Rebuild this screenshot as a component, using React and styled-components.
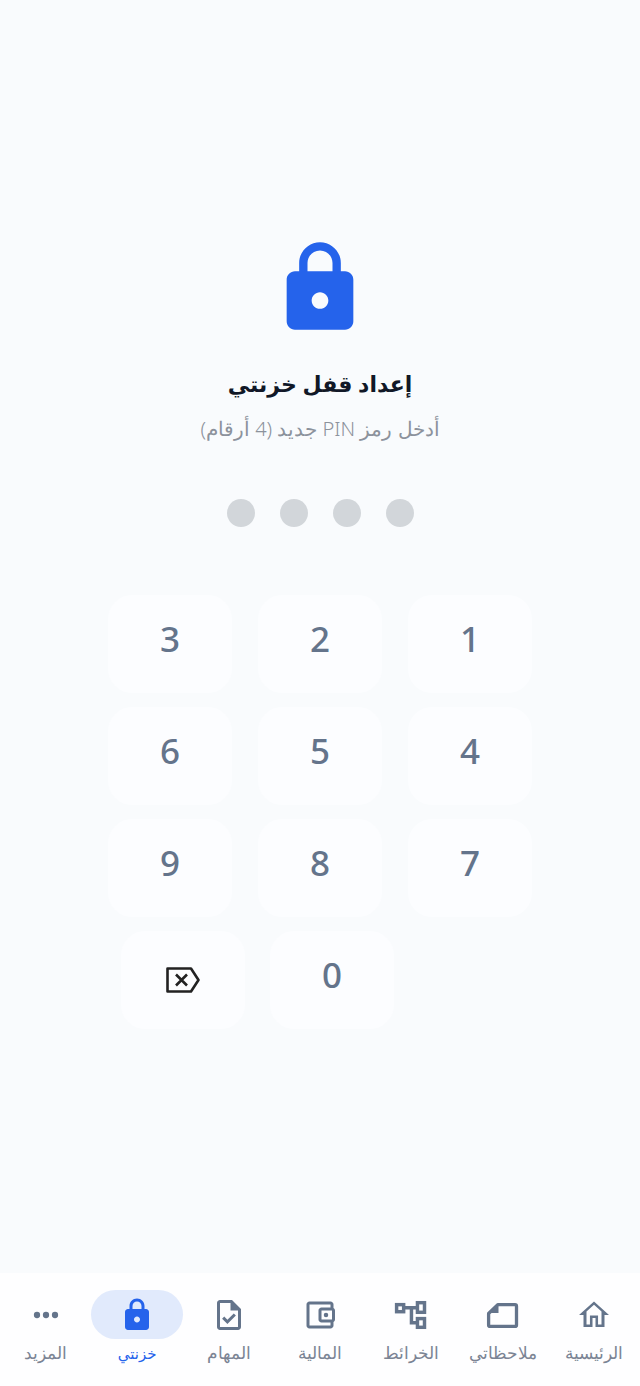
import React from "react";
import styled, { createGlobalStyle } from "styled-components";

const Global = createGlobalStyle`
  html, body { margin: 0; padding: 0; background: #f9fbfd; }
  * { box-sizing: border-box; }
`;

const Page = styled.div`
  width: 640px;
  height: 1386px;
  direction: rtl;
  display: flex;
  flex-direction: column;
  background: #f9fbfd;
  font-family: "Noto Sans", "DejaVu Sans", sans-serif;
`;

const Main = styled.main`
  flex: 1;
  display: flex;
  flex-direction: column;
  align-items: center;
  padding-top: 238px;
`;

const Title = styled.h1`
  margin: 25px 0 0;
  font-size: 22px;
  line-height: 40px;
  font-weight: 700;
  color: #111827;
`;

const Subtitle = styled.p`
  margin: 11px 0 0;
  font-size: 20px;
  line-height: 30px;
  font-weight: 300;
  color: #8c929c;
`;

const Dots = styled.div`
  display: flex;
  gap: 25px;
  margin-top: 55px;
`;

const Dot = styled.span`
  width: 28px;
  height: 28px;
  border-radius: 50%;
  background: #d2d6da;
`;

const Pad = styled.div`
  margin-top: 68px;
  width: 424px;
  display: flex;
  flex-wrap: wrap;
  justify-content: space-between;
  row-gap: 14px;
`;

const LastRow = styled.div`
  display: flex;
  gap: 25px;
  margin-top: 14px;
  width: 424px;
  padding-right: 138px;
`;

const Key = styled.button`
  width: 124px;
  height: 98px;
  border: 0;
  border-radius: 24px;
  background: #fcfdff;
  color: #64748b;
  font-family: inherit;
  font-size: 35px;
  font-weight: 500;
  line-height: 1;
  padding: 0 0 11px;
  display: flex;
  align-items: center;
  justify-content: center;
`;

const IconKey = styled(Key)`
  padding: 0;
`;

const Nav = styled.nav`
  height: 113px;
  background: #fefeff;
  display: flex;
  justify-content: space-between;
  padding: 17px 0 0;
`;

const NavItem = styled.div`
  width: 91.4px;
  display: flex;
  flex-direction: column;
  align-items: center;
  color: ${(p) => (p.$active ? "#2563eb" : "#7b8494")};
  font-size: ${(p) => (p.$active ? "15px" : "17px")};
  font-weight: ${(p) => (p.$active ? 500 : 300)};
`;

const IconWrap = styled.span`
  width: 92px;
  height: 49px;
  display: flex;
  align-items: center;
  justify-content: center;
  border-radius: 25px;
  background: ${(p) => (p.$active ? "#e1eafc" : "transparent")};
  color: ${(p) => (p.$active ? "#2563eb" : "#64748b")};
`;

const NavLabel = styled.span`
  margin-top: 2px;
  line-height: 24px;
  white-space: nowrap;
`;

const Glyph = ({ size = 36, children }) => (
  <svg width={size} height={size} viewBox="0 0 24 24" fill="currentColor">
    {children}
  </svg>
);

const LockPath = () => (
  <path d="M18 8h-1V6c0-2.76-2.24-5-5-5S7 3.24 7 6v2H6c-1.1 0-2 .9-2 2v10c0 1.1.9 2 2 2h12c1.1 0 2-.9 2-2V10c0-1.1-.9-2-2-2zm-6 9c-1.1 0-2-.9-2-2s.9-2 2-2 2 .9 2 2-.9 2-2 2zM9 8V6c0-1.66 1.34-3 3-3s3 1.34 3 3v2H9z" />
);

const HomeIcon = () => (
  <Glyph>
    <path d="M12 3 2 12h3v8h6v-6h2v6h6v-8h3L12 3zm5 15.3h-2.3V12.3H9.3v6H7v-8.7l5-4.4 5 4.4v8.7z" />
  </Glyph>
);

const NotesIcon = () => (
  <Glyph>
    <path
      d="M8.5 5.1H20a1 1 0 0 1 1 1v12.5a1 1 0 0 1-1 1H3.4a1 1 0 0 1-1-1V11z"
      fill="none"
      stroke="currentColor"
      strokeWidth="2.2"
      strokeLinejoin="round"
    />
    <path d="M9 5v5.6H3z" />
  </Glyph>
);

const MapsIcon = () => (
  <Glyph>
    <g fill="none" stroke="currentColor" strokeWidth="2.3">
      <rect x="2.4" y="5.1" width="4.7" height="4.7" />
      <rect x="16.3" y="3.8" width="4.7" height="6.4" />
      <rect x="16.3" y="14.4" width="4.7" height="5.8" />
      <path d="M7 7.2h9.3M12.3 7.2v10h4" />
    </g>
  </Glyph>
);

const WalletIcon = () => (
  <Glyph>
    <path d="M21 7.28V5c0-1.1-.9-2-2-2H5c-1.11 0-2 .9-2 2v14c0 1.1.89 2 2 2h14c1.1 0 2-.9 2-2v-2.28c.59-.35 1-.98 1-1.72V9c0-.74-.41-1.38-1-1.72zM20 9v6h-7V9h7zM5 19V5h14v2h-6c-1.1 0-2 .9-2 2v6c0 1.1.9 2 2 2h6v2H5z" />
    <circle cx="16" cy="12" r="1.5" />
  </Glyph>
);

const TasksIcon = () => (
  <Glyph>
    <path d="M14 2H6c-1.1 0-2 .9-2 2v16c0 1.1.9 2 2 2h12c1.1 0 2-.9 2-2V8l-6-6zm4 18H6V4h7v5h5v11zm-9.18-6.95L7.4 14.46 10.94 18l5.66-5.66-1.41-1.41-4.24 4.24-2.13-2.12z" />
  </Glyph>
);

const MoreIcon = () => (
  <Glyph>
    <circle cx="6" cy="12" r="2.1" />
    <circle cx="12" cy="12" r="2.1" />
    <circle cx="18" cy="12" r="2.1" />
  </Glyph>
);

const DeleteIcon = () => (
  <svg width="36" height="28" viewBox="0 0 36 28" fill="none" stroke="#222" strokeWidth="2.6">
    <path d="M2.5 2.5h23.5l7.5 11.5-7.5 11.5H2.5z" strokeLinejoin="round" />
    <path d="M11 8.5l11 11M22 8.5l-11 11" />
  </svg>
);

const navItems = [
  { label: "الرئيسية", icon: <HomeIcon /> },
  { label: "ملاحظاتي", icon: <NotesIcon /> },
  { label: "الخرائط", icon: <MapsIcon /> },
  { label: "المالية", icon: <WalletIcon /> },
  { label: "المهام", icon: <TasksIcon /> },
  { label: "خزنتي", icon: <Glyph><LockPath /></Glyph>, active: true },
  { label: "المزيد", icon: <MoreIcon /> },
];

const digits = ["1", "2", "3", "4", "5", "6", "7", "8", "9"];

export default function App() {
  return (
    <Page>
      <Global />
      <Main>
        <svg width="100" height="100" viewBox="0 0 24 24" fill="#2563eb">
          <LockPath />
        </svg>
        <Title>إعداد قفل خزنتي</Title>
        <Subtitle>أدخل رمز PIN جديد (4 أرقام)</Subtitle>
        <Dots>
          {[0, 1, 2, 3].map((i) => (
            <Dot key={i} />
          ))}
        </Dots>
        <Pad>
          {digits.map((d) => (
            <Key key={d}>{d}</Key>
          ))}
        </Pad>
        <LastRow>
          <Key>0</Key>
          <IconKey>
            <DeleteIcon />
          </IconKey>
        </LastRow>
      </Main>
      <Nav>
        {navItems.map((item) => (
          <NavItem key={item.label} $active={item.active}>
            <IconWrap $active={item.active}>{item.icon}</IconWrap>
            <NavLabel>{item.label}</NavLabel>
          </NavItem>
        ))}
      </Nav>
    </Page>
  );
}
